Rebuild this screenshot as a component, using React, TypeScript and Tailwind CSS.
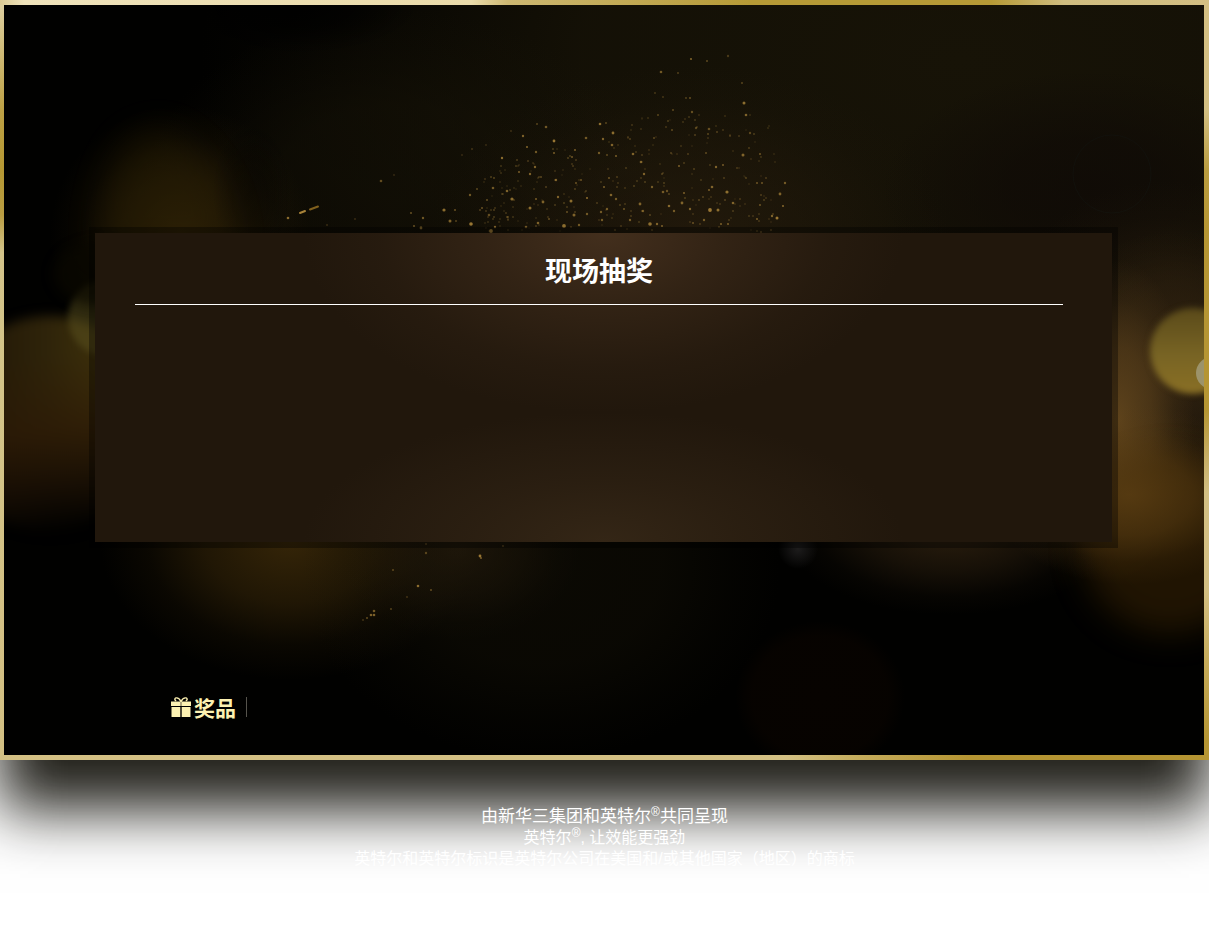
import React from "react";

// x, y, radius, opacity
const sparks: [number, number, number, number][] = [
  [411, 213, 1.1, 0.6], [423, 218, 1.2, 0.7], [414, 226, 1.1, 0.6], [421, 228, 1.4, 0.8],
  [444, 210, 1.6, 0.9], [455, 210, 1.1, 0.6], [450, 221, 1.5, 0.8], [456, 221, 1, 0.5],
  [471, 224, 1.8, 1], [491, 231, 1.9, 0.9], [495, 227, 1.2, 0.8], [470, 195, 1.2, 0.7],
  [477, 189, 1.1, 0.5], [482, 208, 1.1, 0.6], [489, 215, 1.3, 0.6], [493, 188, 1.3, 0.7],
  [494, 178, 1, 0.5], [502, 158, 1.2, 0.9], [507, 191, 1.3, 0.8], [512, 199, 1.6, 0.9],
  [472, 149, 1, 0.35], [486, 145, 0.9, 0.3], [462, 155, 0.9, 0.3], [508, 217, 1, 0.5],
  [523, 136, 1.2, 0.8], [527, 147, 1.1, 0.8], [511, 131, 0.9, 0.35], [537, 124, 1, 0.5],
  [546, 127, 1.3, 0.7], [536, 152, 1.2, 0.7], [554, 141, 1.4, 1], [554, 153, 1.1, 0.7],
  [535, 167, 1.2, 0.8], [530, 174, 1.2, 0.8], [519, 172, 1.1, 0.7], [541, 177, 1.1, 0.5],
  [556, 180, 1.2, 0.8], [558, 197, 1.2, 0.8], [543, 202, 1.4, 0.8], [536, 199, 1.1, 0.7],
  [530, 208, 1.5, 0.9], [538, 223, 1.3, 0.8], [526, 227, 1.3, 0.7], [549, 219, 1, 0.6],
  [564, 226, 1.9, 0.9], [574, 215, 1.5, 0.8], [571, 201, 1.5, 0.9], [587, 198, 1.1, 0.7],
  [581, 180, 1.1, 0.6], [576, 183, 1.1, 0.6], [575, 150, 1.1, 0.7], [572, 157, 1, 0.7],
  [586, 138, 1.3, 0.7], [600, 124, 1.3, 0.9], [606, 123, 1, 0.5], [613, 133, 1.4, 0.9],
  [603, 139, 1.2, 0.8], [612, 145, 1.3, 0.8], [599, 153, 1.2, 0.7], [607, 155, 1.1, 0.5],
  [616, 156, 1.1, 0.7], [633, 154, 1.3, 0.8], [641, 162, 1.3, 0.8], [644, 174, 1.2, 0.8],
  [652, 187, 1.2, 0.7], [663, 192, 1.3, 0.7], [667, 191, 1.2, 0.6], [604, 187, 1.1, 0.7],
  [611, 195, 1.3, 0.8], [609, 178, 1.1, 0.6], [601, 212, 1.2, 0.7], [602, 220, 1.2, 0.7],
  [587, 214, 1.2, 0.7], [579, 225, 1.2, 0.7], [616, 199, 1.2, 0.7], [640, 204, 1.4, 0.8],
  [643, 211, 1.2, 0.7], [650, 224, 1.8, 0.9], [657, 224, 1.2, 0.8], [662, 226, 1.1, 0.7],
  [630, 220, 1.2, 0.7], [624, 209, 1.1, 0.6], [607, 209, 1.2, 0.7], [669, 206, 1.3, 0.7],
  [674, 211, 1.2, 0.7], [684, 193, 1.1, 0.7], [682, 203, 1.4, 0.8], [690, 209, 1.2, 0.8],
  [693, 223, 1, 0.6], [704, 220, 1.2, 0.7], [710, 210, 1.9, 1], [718, 210, 1.5, 0.9],
  [712, 187, 1.3, 0.8], [709, 190, 1.1, 0.7], [727, 192, 1.6, 0.9], [733, 203, 1.3, 0.8],
  [728, 224, 1.1, 0.7], [721, 224, 1.1, 0.7], [716, 167, 1.2, 0.8], [723, 165, 1, 0.7],
  [706, 153, 1.1, 0.5], [694, 169, 1.1, 0.4], [679, 166, 1.1, 0.7], [688, 154, 1, 0.4],
  [743, 155, 1.5, 0.8], [750, 133, 1.2, 0.5], [746, 115, 1.3, 0.8], [744, 103, 1.5, 0.9],
  [742, 83, 1, 0.5], [728, 56, 1.2, 0.4], [707, 61, 1.1, 0.5], [691, 59, 1.1, 0.8],
  [661, 72, 1.3, 0.7], [678, 73, 0.9, 0.5], [690, 98, 1, 0.6], [686, 98, 0.9, 0.5],
  [692, 112, 1.2, 0.6], [673, 110, 1.1, 0.5], [658, 115, 1, 0.5], [654, 138, 1.1, 0.5],
  [672, 130, 1.1, 0.5], [696, 128, 1.2, 0.5], [709, 129, 1.3, 0.6], [708, 134, 1, 0.5],
  [655, 93, 0.9, 0.4], [663, 97, 0.9, 0.4], [760, 154, 1.1, 0.6], [785, 183, 1.2, 0.7],
  [780, 194, 1.4, 0.8], [783, 206, 1.1, 0.8], [760, 205, 1.1, 0.6], [772, 216, 1.2, 0.8],
  [777, 218, 1.5, 1], [757, 183, 1.1, 0.6], [762, 183, 1.1, 0.6], [746, 178, 1.1, 0.4],
  [757, 219, 1.1, 0.7], [381, 181, 1.3, 0.6], [394, 175, 0.9, 0.3], [288, 218, 1.3, 0.9],
  [355, 219, 1, 0.3], [327, 225, 1, 0.3], [426, 544, 1, 0.4], [426, 553, 1.2, 0.5],
  [480, 556, 1.4, 1], [481, 558, 1.1, 0.7], [503, 546, 0.9, 0.5], [393, 570, 1.1, 0.5],
  [418, 586, 1.3, 0.9], [431, 590, 1, 0.6], [407, 597, 0.9, 0.4], [391, 609, 1, 0.5],
  [374, 611, 1.3, 0.7], [371, 615, 1.3, 0.8], [374, 615, 1.3, 0.8], [367, 618, 1, 0.6],
  [363, 620, 0.9, 0.4],
];

function makeDust(count: number): [number, number, number][] {
  let seed = 41;
  const next = () => {
    seed = (seed * 16807) % 2147483647;
    return seed / 2147483647;
  };
  const out: [number, number, number][] = [];
  while (out.length < count) {
    const x = 480 + next() * 295;
    const top = x < 640 ? 170 - (x - 480) * 0.3 : 112;
    const y = 232 - (232 - top) * Math.pow(next(), 1.1);
    out.push([Math.round(x), Math.round(y), 0.1 + next() * 0.28]);
  }
  return out;
}

const dust = makeDust(260);

function Glow({ id, color, stops }: { id: string; color: string; stops: [number, number][] }) {
  return (
    <radialGradient id={id}>
      {stops.map(([o, a]) => (
        <stop key={o} offset={o} stopColor={color} stopOpacity={a} />
      ))}
    </radialGradient>
  );
}

function Blur({ id, size }: { id: string; size: number }) {
  return (
    <filter id={id} x="-40%" y="-40%" width="180%" height="180%" colorInterpolationFilters="sRGB">
      <feGaussianBlur stdDeviation={size} />
    </filter>
  );
}

function Backdrop() {
  return (
    <svg
      aria-hidden="true"
      className="absolute inset-0 h-full w-full"
      viewBox="4 5 1200 750"
      preserveAspectRatio="xMidYMid slice"
    >
      <defs>
        <Glow id="olive" color="#171307" stops={[[0, 1], [0.5, 0.85], [0.8, 0.3], [1, 0]]} />
        <Glow id="brown" color="#2d200f" stops={[[0, 1], [0.5, 0.5], [0.8, 0.12], [1, 0]]} />
        <Glow id="gold" color="#352508" stops={[[0, 1], [0.45, 0.6], [0.75, 0.18], [1, 0]]} />
        <Glow id="amber" color="#5e431c" stops={[[0, 1], [0.45, 0.6], [0.75, 0.18], [1, 0]]} />
        <Glow id="rust" color="#5e4013" stops={[[0, 1], [0.45, 0.65], [0.75, 0.2], [1, 0]]} />
        <Glow id="shade" color="#0f0a06" stops={[[0, 1], [0.4, 0.8], [1, 0]]} />
        <Glow id="night" color="#000000" stops={[[0, 0.9], [0.5, 0.6], [1, 0]]} />
        <Glow id="ember" color="#070300" stops={[[0, 1], [0.8, 0.9], [1, 0]]} />
        <Glow id="blue" color="#1d1c1c" stops={[[0, 1], [0.4, 0.6], [1, 0]]} />
        <linearGradient id="disc" x1="0" y1="0" x2="1" y2="0">
          <stop offset="0" stopColor="#1c1204" />
          <stop offset="0.5" stopColor="#2f240a" />
          <stop offset="0.95" stopColor="#4a3c0c" />
        </linearGradient>
        <linearGradient id="discFade" x1="0.35" y1="0" x2="0.5" y2="1">
          <stop offset="0.2" stopColor="#2f1b05" stopOpacity="0" />
          <stop offset="0.55" stopColor="#2b1805" stopOpacity="0.7" />
          <stop offset="0.8" stopColor="#140b03" stopOpacity="0.88" />
          <stop offset="1" stopColor="#010100" />
        </linearGradient>
        <linearGradient id="coin" x1="0" y1="0" x2="0" y2="1">
          <stop offset="0" stopColor="#5a4a1a" />
          <stop offset="0.55" stopColor="#786424" />
          <stop offset="1" stopColor="#8a7025" />
        </linearGradient>
        <Blur id="soft3" size={3} />
        <Blur id="soft6" size={6} />
        <Blur id="soft14" size={16} />
      </defs>
      <rect x="0" y="0" width="1209" height="760" fill="#010100" />
      <ellipse cx="960" cy="60" rx="760" ry="420" fill="url(#olive)" />
      <ellipse cx="400" cy="200" rx="260" ry="190" fill="url(#olive)" opacity="0.6" />
      <ellipse cx="690" cy="235" rx="260" ry="170" fill="url(#brown)" opacity="0.55" />
      <ellipse cx="290" cy="5" rx="130" ry="50" fill="url(#night)" />
      <ellipse cx="1090" cy="190" rx="210" ry="120" fill="url(#shade)" opacity="0.8" />
      <circle cx="1112" cy="174" r="39" fill="none" stroke="#12110c" strokeWidth="1" />

      <ellipse cx="180" cy="235" rx="130" ry="130" fill="url(#gold)" opacity="0.8" />
      <path d="M100 250Q100 130 165 130Q228 160 234 250Z" fill="#2b2104" opacity="0.4" filter="url(#soft14)" />
      <ellipse cx="252" cy="190" rx="40" ry="70" fill="url(#night)" opacity="0.4" />

      <g filter="url(#soft6)">
        <circle cx="50" cy="422" r="106" fill="url(#disc)" />
        <circle cx="50" cy="422" r="110" fill="url(#discFade)" />
      </g>
      <circle cx="106" cy="318" r="38" fill="#5b521f" opacity="0.5" filter="url(#soft3)" />
      <ellipse cx="98" cy="274" rx="45" ry="32" fill="#0a0800" opacity="0.7" filter="url(#soft6)" />

      <ellipse cx="290" cy="540" rx="190" ry="140" fill="url(#gold)" />
      <ellipse cx="460" cy="550" rx="120" ry="90" fill="url(#brown)" opacity="0.7" />
      <ellipse cx="540" cy="570" rx="240" ry="190" fill="url(#olive)" opacity="0.45" />
      <ellipse cx="950" cy="525" rx="170" ry="90" fill="url(#brown)" />
      <circle cx="798" cy="549" r="20" fill="url(#blue)" />
      <ellipse cx="820" cy="697" rx="85" ry="76" fill="url(#ember)" />

      <ellipse cx="1165" cy="370" rx="180" ry="190" fill="url(#brown)" />
      <ellipse cx="1175" cy="350" rx="120" ry="120" fill="url(#brown)" />
      <ellipse cx="1118" cy="420" rx="76" ry="160" fill="url(#amber)" />
      <circle cx="1170" cy="545" r="88" fill="#2b1b03" opacity="0.75" filter="url(#soft14)" />
      <ellipse cx="1130" cy="495" rx="140" ry="90" fill="url(#rust)" opacity="0.8" />
      <circle cx="1193" cy="351" r="43" fill="url(#coin)" filter="url(#soft3)" />
      <circle cx="1212" cy="373" r="16" fill="#9c936a" />

      {dust.map(([x, y, a], i) => (
        <circle key={i} cx={x} cy={y} r="1" fill="#b08a3e" opacity={a} />
      ))}
      {sparks.map(([x, y, r, a], i) => (
        <circle key={i} cx={x} cy={y} r={r} fill="#b9903f" opacity={a * 0.8} />
      ))}
      <path d="M300 213L305 211" stroke="#a88339" strokeWidth="2" strokeLinecap="round" />
      <path d="M310 209.500L318 206.500" stroke="#80601d" strokeWidth="2" strokeLinecap="round" />
    </svg>
  );
}

function GiftIcon() {
  return (
    <svg aria-hidden="true" className="h-5 w-5" viewBox="0 0 20 20" fill="currentColor">
      <path d="M0 4.500H20V9H0Z" />
      <path d="M.5 10H9.300V20H1.100Q.5 20 .5 19.400Z" />
      <path d="M10.700 10H19.500V19.400Q19.500 20 19 20H10.700Z" />
      <path d="M9.300 5H10.700V9H9.300Z" fill="#8d8765" />
      <path
        d="M10 4.600C8.500 1.500 6.500 .6 4.900 .9C3.400 1.300 3.500 3.300 5.200 3.900M10 4.600C11.500 1.500 13.500 .6 15.100 .9C16.600 1.300 16.500 3.300 14.800 3.900"
        fill="none"
        stroke="currentColor"
        strokeWidth="1.400"
      />
    </svg>
  );
}

export default function App() {
  return (
    <main className="bg-white font-['Noto_Sans_CJK_SC','Noto_Sans',sans-serif]">
      <div className="bg-[linear-gradient(90deg,#dccb94_0px,#efe3bb_2%,#eadbaa_39%,#cdb872_42%,#c4ac5a_50%,#b69a36_62%,#b69a36_82%,#d0bd80_88%,#d3bf83_100%),linear-gradient(90deg,#d3c083_0%,#d3c083_65%,#c5ac5c_71%,#b59533_80%,#b59533_100%)] bg-[length:100%_50%,100%_50%] bg-[position:top,bottom] bg-no-repeat py-[5px] shadow-[0_50px_56px_rgba(12,11,4,0.91)]">
        <div className="bg-[linear-gradient(180deg,#ddcf9f_0%,#bda145_14%,#b59833_22%,#b99d42_28%,#d3c48a_33%,#d3c083_100%),linear-gradient(180deg,#d3bf83_0%,#d3bf83_14%,#b99c40_22%,#b59533_30%,#b59533_54%,#c8b06a_61%,#d3bf83_65%,#d3bf83_78%,#c5aa58_88%,#b59533_98%)] bg-[length:50%_100%,50%_100%] bg-[position:left,right] bg-no-repeat pr-[5px] pl-1">
          <section className="relative flex aspect-[8/5] flex-col justify-between overflow-hidden bg-black pt-[222px] pb-9">
            <Backdrop />
            <div className="relative mr-[86px] ml-[85px] bg-black/35 p-1.5">
              <div className="min-h-[309px] bg-[#21170c] bg-[radial-gradient(ellipse_300px_180px_at_50%_0%,#432f1d,#432f1d80_40%,#432f1d26_75%,transparent),radial-gradient(ellipse_300px_130px_at_50%_100%,#342616,#34261680_45%,transparent)] pr-[49px] pl-10">
                <h1 className="border-b border-white pt-[17px] pb-3.5 text-center text-[27px] leading-10 font-bold text-white">
                  现场抽奖
                </h1>
              </div>
            </div>
            <div className="relative ml-[167px] flex items-center">
              <h2 className="flex items-center gap-[3px] text-[21px] leading-6 font-bold text-[#fdf2b2]">
                <GiftIcon />
                奖品
              </h2>
              <span className="ml-2.5 h-5 w-px bg-[#55534c]" />
            </div>
          </section>
        </div>
      </div>
      <footer className="relative pt-[46px] pb-[66px] text-center font-['Liberation_Sans','Noto_Sans_CJK_SC',sans-serif] text-base leading-[21px] text-white">
        <p className="text-[17px] leading-[21px]">
          由新华三集团和英特尔<sup className="text-[12px]">®</sup>共同呈现
        </p>
        <p>
          英特尔<sup className="text-[12px]">®</sup>, 让效能更强劲
        </p>
        <p>英特尔和英特尔标识是英特尔公司在美国和/或其他国家（地区）的商标</p>
      </footer>
    </main>
  );
}
